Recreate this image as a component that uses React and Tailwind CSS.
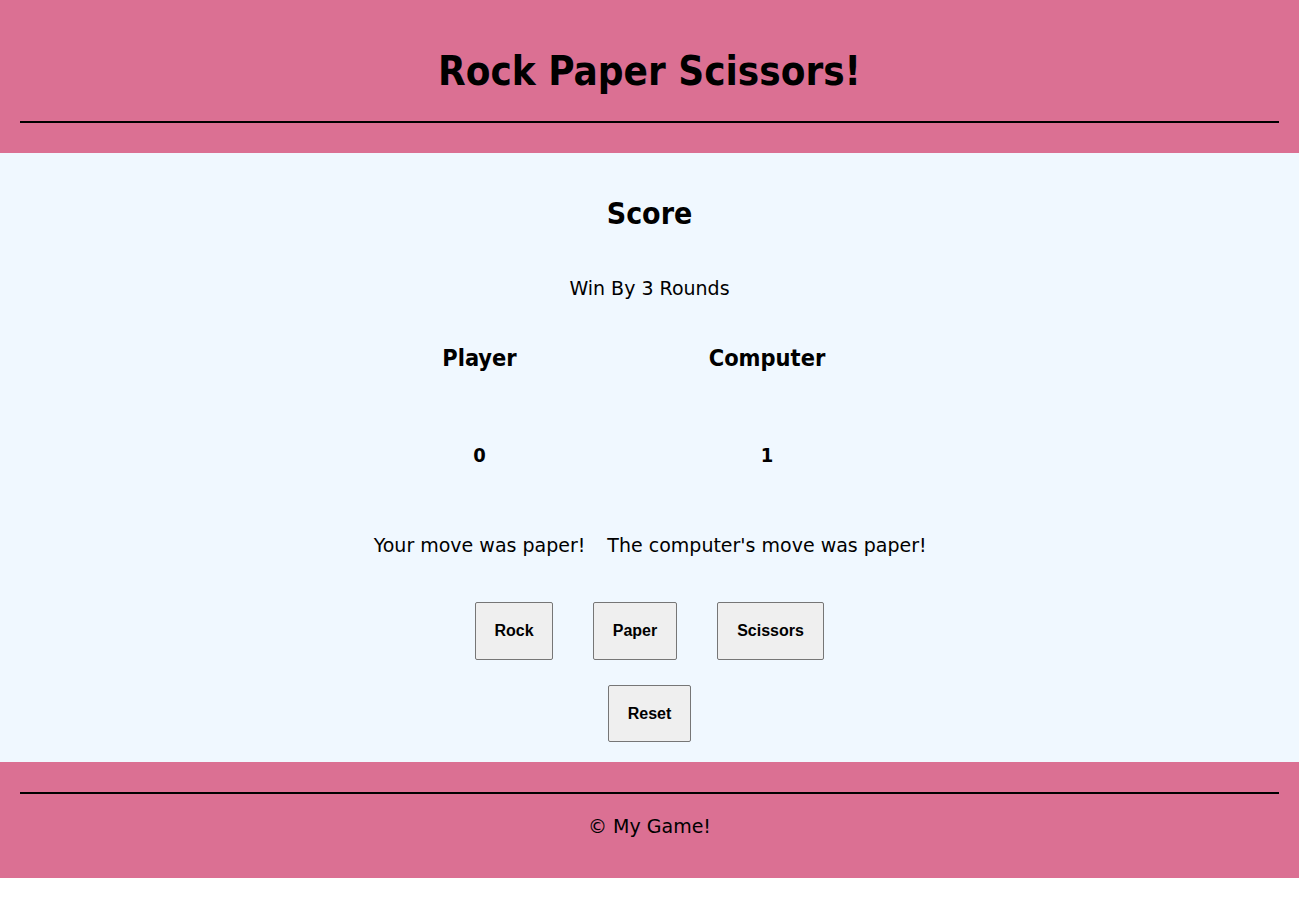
export default function App() {
  const font = { fontFamily: '"DejaVu Sans Condensed", "DejaVu Sans", sans-serif' };
  const reg = { fontFamily: '"DejaVu Sans", sans-serif' };
  const btn = { fontFamily: '"Liberation Sans", Arial, sans-serif' };
  const buttons = [
    { t: 'Rock', w: 'w-[78px]' },
    { t: 'Paper', w: 'w-[84px]' },
    { t: 'Scissors', w: 'w-[107px]' },
  ];
  return (
    <div className="w-full" style={font}>
      <header className="bg-[#db7093] pt-[47px] pb-[30px]">
        <h1 className="text-center text-[40px] leading-[48px] font-bold text-black">Rock Paper Scissors!</h1>
        <div className="mx-[20px] mt-[26px] h-[2px] bg-black" />
      </header>
      <main className="bg-[#f0f8ff] pt-[43px] pb-[20px] flex flex-col items-center text-black">
        <h2 className="text-[30px] leading-[36px] font-bold">Score</h2>
        <p className="mt-[44px] text-[19px] leading-[24px]" style={reg}>Win By 3 Rounds</p>
        <div className="mt-[44px] flex gap-[20px]">
          <div className="w-[215px] flex flex-col items-center">
            <h3 className="text-[23.4px] leading-[28px] font-bold">Player</h3>
            <h4 className="mt-[71px] text-[20px] leading-[24px] font-bold">0</h4>
            <p className="mt-[66px] text-[19px] leading-[24px] whitespace-nowrap" style={reg}>Your move was paper!</p>
          </div>
          <div className="w-[320px] flex flex-col items-center">
            <h3 className="text-[23.4px] leading-[28px] font-bold">Computer</h3>
            <h4 className="mt-[71px] text-[20px] leading-[24px] font-bold">1</h4>
            <p className="mt-[66px] text-[19px] leading-[24px] whitespace-nowrap" style={reg}>The computer's move was paper!</p>
          </div>
        </div>
        <div className="mt-[45px] flex gap-[40px]" style={btn}>
          {buttons.map((b) => (
            <button key={b.t} className={`${b.w} h-[58px] bg-[#efefef] border border-[#767676] rounded-[2px] text-[16px] font-bold text-black`}>{b.t}</button>
          ))}
        </div>
        <button className="mt-[25px] w-[83px] h-[57px] bg-[#efefef] border border-[#767676] rounded-[2px] text-[16px] font-bold text-black" style={btn}>Reset</button>
      </main>
      <footer className="bg-[#db7093] pt-[30px] pb-[40px]">
        <div className="mx-[20px] h-[2px] bg-black" />
        <p className="mt-[20px] text-center text-[19px] leading-[24px] text-black" style={reg}>© My Game!</p>
      </footer>
    </div>
  );
}
